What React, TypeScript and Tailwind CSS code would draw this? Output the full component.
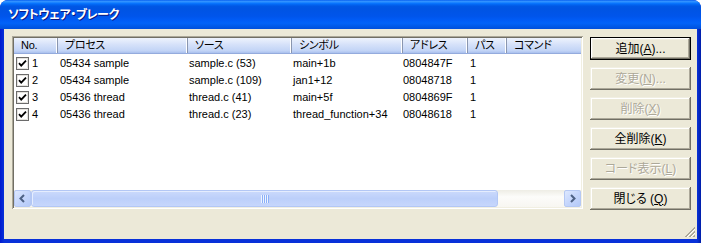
import React from "react";

const cols = [
  { label: "No.", w: "w-[44px]" },
  { label: "プロセス", w: "w-[130px]" },
  { label: "ソース", w: "w-[104px]" },
  { label: "シンボル", w: "w-[111px]" },
  { label: "アドレス", w: "w-[65px]" },
  { label: "パス", w: "w-[39px]" },
  { label: "コマンド", w: "w-[74px]" },
];

const rows = [
  ["1", "05434 sample", "sample.c (53)", "main+1b", "0804847F", "1", ""],
  ["2", "05434 sample", "sample.c (109)", "jan1+12", "08048718", "1", ""],
  ["3", "05436 thread", "thread.c (41)", "main+5f", "0804869F", "1", ""],
  ["4", "05436 thread", "thread.c (23)", "thread_function+34", "08048618", "1", ""],
];

function Check() {
  return (
    <svg width="13" height="13" viewBox="0 0 13 13" className="shrink-0">
      <rect x="0.5" y="0.5" width="12" height="12" fill="#fff" stroke="#6b6b6b" />
      <rect x="1.5" y="1.5" width="10" height="10" fill="none" stroke="#d4d0c8" strokeWidth="0.6" />
      <path d="M3 6.2 L5.2 8.6 L10 3.6" fill="none" stroke="#000" strokeWidth="1.8" />
    </svg>
  );
}

function Btn({
  children,
  disabled,
  def,
}: {
  children: React.ReactNode;
  disabled?: boolean;
  def?: boolean;
}) {
  return (
    <div
      className={
        "w-[101px] h-[23px] flex items-center justify-center text-[12px] leading-none bg-[#ECE9D8] " +
        (def
          ? "border border-black shadow-[inset_-1px_-1px_#716F64,inset_1px_1px_#FFFFFF,inset_-2px_-2px_#ACA899,inset_2px_2px_#F1EFE2]"
          : "shadow-[inset_-1px_-1px_#716F64,inset_1px_1px_#F1EFE2,inset_-2px_-2px_#ACA899,inset_2px_2px_#FFFFFF]") +
        (disabled ? " text-[#ACA899] [text-shadow:1px_1px_0_#ffffff]" : " text-black")
      }
    >
      {children}
    </div>
  );
}

function U({ children }: { children: React.ReactNode }) {
  return <span className="underline underline-offset-[1px]">{children}</span>;
}

function ScrollBtn({ dir }: { dir: "l" | "r" }) {
  return (
    <div className="w-[17px] h-[17px] shrink-0 rounded-[2px] border border-[#B5C8F3] bg-[linear-gradient(135deg,#DDE8FE_0%,#C5D6FC_50%,#B4C9F7_100%)] flex items-center justify-center">
      <svg width="9" height="9" viewBox="0 0 9 9">
        {dir === "l" ? (
          <path d="M6 1 L2.5 4.5 L6 8" fill="none" stroke="#4D6185" strokeWidth="2" />
        ) : (
          <path d="M3 1 L6.5 4.5 L3 8" fill="none" stroke="#4D6185" strokeWidth="2" />
        )}
      </svg>
    </div>
  );
}

export default function App() {
  return (
    <div className="w-[701px] h-[243px] bg-white font-['Liberation_Sans','Noto_Sans_CJK_JP',sans-serif] [font-feature-settings:'palt'] overflow-hidden">
      <div className="w-full h-full flex flex-col rounded-t-[8px] overflow-hidden bg-[linear-gradient(90deg,#0019CF_0px,#0831D9_4px,#0831D9_calc(100%-4px),#001EA8_100%)]">
        {/* Title bar */}
        <div className="h-[29px] shrink-0 flex items-center pl-[8px] bg-[linear-gradient(180deg,#0058EE_0%,#3593FF_4%,#288EFF_7%,#127DFF_10%,#036FFC_13%,#0262EE_17%,#0057E5_22%,#0054E3_30%,#0055EB_56%,#005BF5_68%,#0263F8_80%,#005AE9_90%,#0050DC_100%)]">
          <span className="text-white font-bold text-[12px] leading-none [text-shadow:1px_1px_0_#0A1883] tracking-[-0.4px]">
            ソフトウェア・ブレーク
          </span>
        </div>
        {/* Client */}
        <div className="flex-1 mx-[4px] mb-[4px] bg-[#ECE9D8] relative flex pt-[7px] pl-[8px]">
          {/* List view */}
          <div className="w-[571px] h-[173px] p-[2px] bg-white shadow-[inset_1px_1px_#ACA899,inset_-1px_-1px_#FFFFFF,inset_2px_2px_#716F64,inset_-2px_-2px_#F1EFE2] flex flex-col">
            <div className="flex h-[16px] shrink-0 bg-[linear-gradient(180deg,#EEF3FD_0%,#D5E1F9_45%,#C2D4F6_85%,#A9C0EE_100%)] border-b border-[#94ABDD]">
              {cols.map((c, i) => (
                <div
                  key={i}
                  className={
                    c.w +
                    " h-full flex items-center pl-[7px] text-[11px] tracking-[-0.3px] leading-none text-black shrink-0 " +
                    (i < cols.length - 1 ? "border-r border-[#8A96AF] shadow-[inset_-1px_0_#FFFFFF]" : "")
                  }
                >
                  {c.label}
                </div>
              ))}
            </div>
            <div className="flex-1 flex flex-col pt-[1px]">
              {rows.map((r, ri) => (
                <div key={ri} className="flex h-[17px] items-center text-[11px] leading-none text-black">
                  <div className="w-[44px] shrink-0 flex items-center pl-[2px] gap-[3px]">
                    <Check />
                    <span>{r[0]}</span>
                  </div>
                  <div className="w-[130px] shrink-0 pl-[2px] whitespace-nowrap">{r[1]}</div>
                  <div className="w-[104px] shrink-0 pl-[1px] whitespace-nowrap">{r[2]}</div>
                  <div className="w-[111px] shrink-0 pl-[1px] whitespace-nowrap">{r[3]}</div>
                  <div className="w-[65px] shrink-0 whitespace-nowrap">{r[4]}</div>
                  <div className="w-[39px] shrink-0 pl-[2px] whitespace-nowrap">{r[5]}</div>
                  <div className="w-[74px] shrink-0 whitespace-nowrap">{r[6]}</div>
                </div>
              ))}
            </div>
            {/* Horizontal scrollbar */}
            <div className="h-[17px] shrink-0 flex bg-[linear-gradient(180deg,#EEEDE5_0%,#FCFCFA_40%,#F7F6F1_100%)]">
              <ScrollBtn dir="l" />
              <div className="w-[467px] h-[17px] rounded-[3px] border border-[#B3C7F5] bg-[linear-gradient(180deg,#CBDAFC_0%,#BCCFFA_50%,#C6D6FC_100%)] flex items-center justify-center shadow-[inset_1px_1px_#E5EDFE]">
                <svg width="8" height="8" viewBox="0 0 8 8">
                  {[0, 2, 4, 6].map((x) => (
                    <g key={x}>
                      <rect x={x} y="0" width="1" height="8" fill="#EEF4FE" />
                      <rect x={x + 1} y="0" width="1" height="8" fill="#8CB0F8" />
                    </g>
                  ))}
                </svg>
              </div>
              <div className="flex-1" />
              <ScrollBtn dir="r" />
            </div>
          </div>
          {/* Buttons */}
          <div className="ml-[7px] pt-[1px] flex flex-col gap-[7px]">
            <Btn def>
              追加(<U>A</U>)...
            </Btn>
            <Btn disabled>
              変更(<U>N</U>)...
            </Btn>
            <Btn disabled>
              削除(<U>X</U>)
            </Btn>
            <Btn>
              全削除(<U>K</U>)
            </Btn>
            <Btn disabled>
              コード表示(<U>L</U>)
            </Btn>
            <Btn>
              閉じる (<U>Q</U>)
            </Btn>
          </div>
          {/* Resize grip */}
          <svg width="12" height="12" viewBox="0 0 12 12" className="absolute right-[1px] bottom-[1px]">
            {[0, 4, 8].map((o) => (
              <g key={o}>
                <path d={`M${11 - o} 11 L11 ${11 - o}`} stroke="#FFFFFF" strokeWidth="1" />
                <path d={`M${10 - o} 11 L11 ${10 - o}`} stroke="#ACA899" strokeWidth="1" />
                <path d={`M${9 - o} 11 L11 ${9 - o}`} stroke="#ACA899" strokeWidth="1" />
              </g>
            ))}
          </svg>
        </div>
      </div>
    </div>
  );
}
